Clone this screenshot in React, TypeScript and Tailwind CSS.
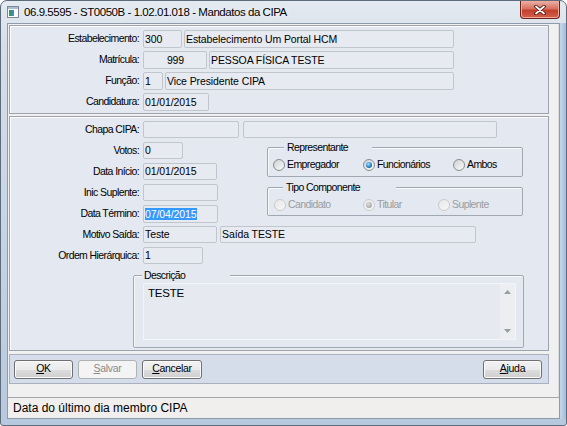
import React from 'react'

const ui = "font-['Liberation_Sans',Arial,sans-serif] text-[10.5px] tracking-[-0.6px]"
const panel = 'border border-[#9ea4ad] shadow-[inset_1px_1px_0_#fbfcfd] bg-[#e4e8f0]'
const field = 'shrink-0 rounded-[2px] border border-[#c1c5cc] bg-[#e7eaf0] pl-[1px] whitespace-nowrap overflow-hidden text-black tracking-[-0.1px]'
const btn = 'h-[19px] shrink-0 rounded-[3px] border border-[#707070] bg-[linear-gradient(to_bottom,#f2f2f2_0%,#ebebeb_50%,#dddddd_51%,#cfcfcf_100%)] shadow-[inset_0_0_0_1px_#fbfbfb] flex items-center justify-center text-black tracking-[-0.3px]'

function Label({ children }: { children: React.ReactNode }) {
  return <div className="w-[129px] shrink-0 text-right text-black">{children}</div>
}

function Radio({ checked = false, disabled = false }: { checked?: boolean; disabled?: boolean }) {
  const ring = disabled
    ? 'border-[#c9cbcd] bg-[linear-gradient(135deg,#e8e8e8,#f7f7f7)]'
    : 'border-[#8a8c8e] bg-[linear-gradient(135deg,#cfd1d3,#fbfbfb)]'
  const dot = disabled
    ? 'bg-[radial-gradient(circle_at_40%_35%,#e0e0e0,#a5a5a5_75%)]'
    : 'bg-[radial-gradient(circle_at_40%_35%,#a8e4ff,#1c79bd_60%,#0d4f86)]'
  return (
    <span className={`w-[12px] h-[12px] shrink-0 rounded-full border flex items-center justify-center ${ring}`}>
      {checked && <span className={`w-[6px] h-[6px] rounded-full ${dot}`} />}
    </span>
  )
}

function Option({ label, checked, disabled, className = '' }: { label: string; checked?: boolean; disabled?: boolean; className?: string }) {
  return (
    <div className={`flex items-center gap-[2px] shrink-0 ${className}`}>
      <Radio checked={checked} disabled={disabled} />
      <span className={disabled ? 'text-[#9c9c9c]' : 'text-black'}>{label}</span>
    </div>
  )
}

function GroupBox({ title, pad, className = '', children }: { title: string; pad: string; className?: string; children?: React.ReactNode }) {
  return (
    <div className={`relative shrink-0 border border-[#a2a8b1] rounded-[2px] shadow-[inset_1px_1px_0_#f7f8fa] ${className}`}>
      {/* legend sits on the top border */}
      <span className={`absolute -top-[8px] bg-[#e4e8f0] leading-[14px] text-black ${pad}`}>{title}</span>
      {children}
    </div>
  )
}

function Underlined({ first, rest }: { first: string; rest: string }) {
  return (
    <span>
      <span className="underline underline-offset-[1px]">{first}</span>
      {rest}
    </span>
  )
}

export default function App() {
  return (
    <div className={`w-[567px] h-[426px] flex flex-col rounded-t-[7px] rounded-b-[3px] border border-[#5d6b7b] bg-[linear-gradient(to_bottom,#e4eaf1_0%,#d6dfe9_10%,#c4d3e4_60%,#b7c9de_100%)] overflow-hidden ${ui}`}>
      {/* title bar */}
      <div className="h-[22px] shrink-0 flex items-start relative">
        <div className="mt-[5px] ml-[6px]">
          <svg width="12" height="12" viewBox="0 0 12 12">
            <rect x="0.5" y="0.5" width="11" height="11" fill="#fdfdfd" stroke="#7d8894" />
            <rect x="1" y="1" width="10" height="2" fill="#a9bed3" />
            <rect x="2" y="4" width="3" height="6" fill="#2f9b5c" />
            <rect x="5" y="4" width="2" height="6" fill="#4a86c5" />
          </svg>
        </div>
        <div className="ml-[5px] mt-[4px] text-[11.5px] tracking-[-0.45px] leading-[14px] text-black [text-shadow:0_0_6px_#ffffff]">
          06.9.5595 - ST0050B - 1.02.01.018 - Mandatos da CIPA
        </div>
        <div className="ml-auto mr-[6px] w-[40px] h-[18px] rounded-b-[4px] border border-t-0 border-[#6a2219] bg-[linear-gradient(to_bottom,#eab2a8_0%,#d8705f_45%,#c4402c_55%,#d2604c_100%)] shadow-[inset_0_0_0_1px_#f0a898] flex items-center justify-center">
          <svg width="12" height="10" viewBox="0 0 12 10">
            <path d="M2 1.5 L10 8.5 M10 1.5 L2 8.5" stroke="#4a1510" strokeWidth="3.6" strokeLinecap="round" />
            <path d="M2 1.5 L10 8.5 M10 1.5 L2 8.5" stroke="#ffffff" strokeWidth="1.8" strokeLinecap="round" />
          </svg>
        </div>
      </div>

      <div className="flex flex-1">
        <div className="w-[6px] shrink-0" />

        {/* client area */}
        <div className="w-[553px] h-[396px] shrink-0 border border-[#8d9bab] bg-[#f0f0f0] flex flex-col">
          <div className="h-[373px] shrink-0 flex">
            <div className="w-[541px] shrink-0 pl-[1px] flex flex-col">
              {/* header panel */}
              <div className={`mt-[1px] h-[89px] shrink-0 pt-[4px] flex flex-col gap-[3px] ${panel}`}>
                <div className="h-[18px] flex items-center gap-[4px]">
                  <Label>Estabelecimento:</Label>
                  <div className="flex gap-[2px]">
                    <div className={`h-[18px] w-[39px] leading-[16px] ${field}`}>300</div>
                    <div className={`h-[18px] w-[270px] leading-[16px] ${field}`}>Estabelecimento Um Portal HCM</div>
                  </div>
                </div>
                <div className="h-[18px] flex items-center gap-[4px]">
                  <Label>Matrícula:</Label>
                  <div className="flex gap-[2px]">
                    <div className={`h-[18px] w-[64px] leading-[16px] text-center ${field}`}>999</div>
                    <div className={`h-[18px] w-[245px] leading-[16px] ${field}`}>PESSOA FÍSICA TESTE</div>
                  </div>
                </div>
                <div className="h-[18px] flex items-center gap-[4px]">
                  <Label>Função:</Label>
                  <div className="flex gap-[2px]">
                    <div className={`h-[18px] w-[20px] leading-[16px] ${field}`}>1</div>
                    <div className={`h-[18px] w-[289px] leading-[16px] ${field}`}>Vice Presidente CIPA</div>
                  </div>
                </div>
                <div className="h-[18px] flex items-center gap-[4px]">
                  <Label>Candidatura:</Label>
                  <div className={`h-[18px] w-[66px] leading-[16px] ${field}`}>01/01/2015</div>
                </div>
              </div>

              {/* mandate panel */}
              <div className={`mt-[2px] h-[235px] shrink-0 pt-[4px] flex flex-col ${panel}`}>
                <div className="h-[17px] flex items-center gap-[4px]">
                  <Label>Chapa CIPA:</Label>
                  <div className="flex gap-[4px]">
                    <div className={`h-[17px] w-[96px] ${field}`} />
                    <div className={`h-[17px] w-[254px] ${field}`} />
                  </div>
                </div>

                <div className="mt-[4px] flex">
                  <div className="flex flex-col gap-[4px]">
                    <div className="h-[17px] flex items-center gap-[4px]">
                      <Label>Votos:</Label>
                      <div className={`h-[17px] w-[40px] leading-[15px] ${field}`}>0</div>
                    </div>
                    <div className="h-[17px] flex items-center gap-[4px]">
                      <Label>Data Início:</Label>
                      <div className={`h-[17px] w-[74px] leading-[15px] ${field}`}>01/01/2015</div>
                    </div>
                    <div className="h-[17px] flex items-center gap-[4px]">
                      <Label>Inic Suplente:</Label>
                      <div className={`h-[17px] w-[75px] ${field} border-[#a9adb4]`} />
                    </div>
                    <div className="h-[17px] flex items-center gap-[4px]">
                      <Label>Data Término:</Label>
                      <div className={`h-[18px] w-[75px] leading-[16px] ${field} border-[#7eaee0]`}>
                        <span className="bg-[#3399ff] text-white">07/04/2015</span>
                      </div>
                    </div>
                  </div>

                  <div className="ml-[49px] mt-[5px] flex flex-col">
                    <GroupBox title="Representante" pad="left-[16px] pl-[3px] pr-[24px]" className="w-[256px] h-[30px] pl-[5px] pt-[6px] flex">
                      <Option label="Empregador" className="w-[90px]" />
                      <Option label="Funcionários" checked className="w-[90px]" />
                      <Option label="Ambos" />
                    </GroupBox>
                    <GroupBox title="Tipo Componente" pad="left-[15px] pl-[3px] pr-[36px]" className="mt-[10px] w-[256px] h-[29px] pl-[6px] pt-[7px] flex">
                      <Option label="Candidato" disabled className="w-[89px]" />
                      <Option label="Titular" checked disabled className="w-[75px]" />
                      <Option label="Suplente" disabled />
                    </GroupBox>
                  </div>
                </div>

                <div className="mt-[4px] h-[17px] flex items-center gap-[4px]">
                  <Label>Motivo Saída:</Label>
                  <div className="flex gap-[3px]">
                    <div className={`h-[17px] w-[74px] leading-[15px] ${field}`}>Teste</div>
                    <div className={`h-[17px] w-[256px] leading-[15px] ${field}`}>Saída TESTE</div>
                  </div>
                </div>
                <div className="mt-[4px] h-[17px] flex items-center gap-[4px]">
                  <Label>Ordem Hierárquica:</Label>
                  <div className={`h-[17px] w-[60px] leading-[15px] ${field}`}>1</div>
                </div>

                <GroupBox title="Descrição" pad="left-[8px] pl-[2px] pr-[45px]" className="mt-[11px] ml-[123px] w-[391px] h-[73px] pt-[7px] pl-[9px]">
                  <div className="w-[373px] h-[57px] border border-[#f3f4f7] bg-[#e6e9ef] flex">
                    <div className="flex-1 pl-[4px] pt-[1px] text-[11.5px] tracking-[-0.2px] text-black">TESTE</div>
                    <div className="w-[15px] bg-[#eceef2] flex flex-col items-center justify-between py-[6px]">
                      <svg width="7" height="4" viewBox="0 0 7 4"><path d="M0 4 L3.5 0 L7 4 Z" fill="#9a9ea4" /></svg>
                      <svg width="7" height="4" viewBox="0 0 7 4"><path d="M0 0 L3.5 4 L7 0 Z" fill="#9a9ea4" /></svg>
                    </div>
                  </div>
                </GroupBox>
              </div>

              {/* button bar */}
              <div className="mt-[3px] h-[30px] shrink-0 border border-[#a9b1c0] bg-[#d5dcea] flex items-center pl-[4px] pr-[6px] gap-[5px]">
                <div className={`w-[59px] ${btn}`}><Underlined first="O" rest="K" /></div>
                <div className="w-[59px] h-[19px] shrink-0 rounded-[3px] border border-[#adb2b5] bg-[#f4f4f4] flex items-center justify-center text-[#8a8a8a] tracking-[-0.3px]">
                  <Underlined first="S" rest="alvar" />
                </div>
                <div className={`w-[60px] ${btn}`}><Underlined first="C" rest="ancelar" /></div>
                <div className="flex-1" />
                <div className={`w-[59px] ${btn}`}><Underlined first="A" rest="juda" /></div>
              </div>
            </div>
            <div className="flex-1 flex justify-end">
              <div className="w-[1px] bg-[#dcdcdc]" />
            </div>
          </div>

          {/* status bar */}
          <div className="flex-1 border-t border-[#a7a7a7] bg-[#f0efee] pl-[5px] flex items-center text-[12px] tracking-normal text-black">
            Data do último dia membro CIPA
          </div>
        </div>

        <div className="flex-1 bg-[linear-gradient(to_right,#c8d6e6,#9fbfe0)]" />
      </div>
      <div className="h-[6px] shrink-0" />
    </div>
  )
}
